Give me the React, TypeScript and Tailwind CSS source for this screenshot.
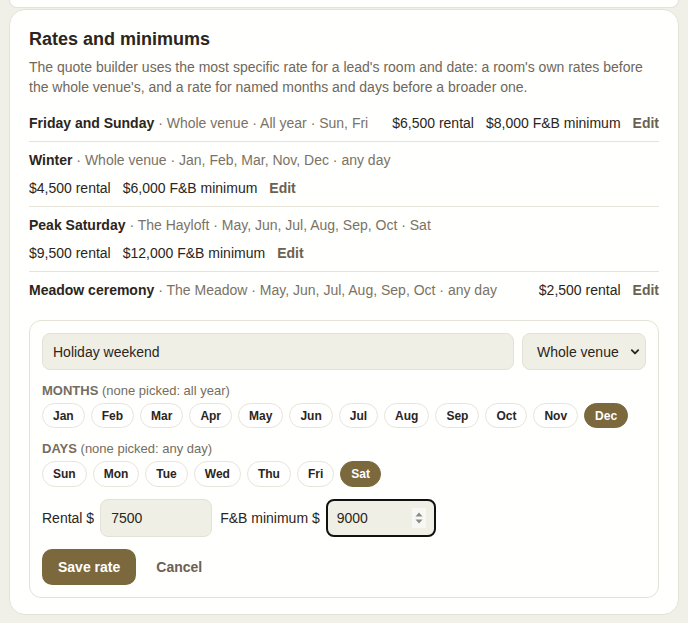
import React from "react";

const months = ["Jan", "Feb", "Mar", "Apr", "May", "Jun", "Jul", "Aug", "Sep", "Oct", "Nov", "Dec"];
const days = ["Sun", "Mon", "Tue", "Wed", "Thu", "Fri", "Sat"];

const rates = [
  { name: "Friday and Sunday", meta: "Whole venue · All year · Sun, Fri", rental: "$6,500 rental", fb: "$8,000 F&B minimum" },
  { name: "Winter", meta: "Whole venue · Jan, Feb, Mar, Nov, Dec · any day", rental: "$4,500 rental", fb: "$6,000 F&B minimum" },
  { name: "Peak Saturday", meta: "The Hayloft · May, Jun, Jul, Aug, Sep, Oct · Sat", rental: "$9,500 rental", fb: "$12,000 F&B minimum" },
  { name: "Meadow ceremony", meta: "The Meadow · May, Jun, Jul, Aug, Sep, Oct · any day", rental: "$2,500 rental", fb: "" },
];

function Chip({ label, on, tall }: { label: string; on?: boolean; tall?: boolean }) {
  const size = tall ? " h-[26px]" : " h-[25px]";
  return (
    <button
      className={
        (on
          ? "rounded-full border border-[#7b683d] bg-[#7b683d] px-2.5 text-xs leading-4 font-bold text-white"
          : "rounded-full border border-[#e7e4da] bg-white px-2.5 text-xs leading-4 font-bold text-[#2b2520]") + size
      }
    >
      {label}
    </button>
  );
}

export default function App() {
  return (
    <div className="min-h-screen bg-[#f1f0e8] px-[9px] pb-[9px] text-[#2b2520]" style={{ fontFamily: '"Liberation Sans", Arial, sans-serif' }}>
      <div className="h-[8px] rounded-b-2xl border border-t-0 border-[#e4e1d6] bg-[#fffffd]" />
      <div className="mt-px rounded-2xl border border-[#e4e1d6] bg-[#fffffd] px-[19px] pt-[15px] pb-4">
        <h2 className="text-lg leading-7 font-bold">Rates and minimums</h2>
        <p className="mt-1 text-sm leading-5 text-[#6f685c]">
          The quote builder uses the most specific rate for a lead's room and date: a room's own rates before the whole venue's, and a rate for named months and days before a broader one.
        </p>

        <div className="mt-2">
          {rates.map((r, i) => (
            <div
              key={r.name}
              className={
                "flex flex-wrap items-baseline justify-between gap-x-4 gap-y-2 py-2 text-sm leading-5" +
                (i < rates.length - 1 ? " border-b border-[#e6e3d9]" : "")
              }
            >
              <div>
                <span className="font-bold">{r.name}</span>
                <span className="text-[#7a7266]"> · {r.meta}</span>
              </div>
              <div className="flex gap-3">
                <span>{r.rental}</span>
                {r.fb && <span>{r.fb}</span>}
                <button className="font-bold text-[#6b6152]">Edit</button>
              </div>
            </div>
          ))}
        </div>

        <div className="mt-3 rounded-xl border border-[#e4e1d6] p-3">
          <div className="flex gap-2">
            <input
              defaultValue="Holiday weekend"
              className="h-[37px] min-w-0 flex-1 rounded-lg border border-[#e4e1d6] bg-[#f0efe6] px-[10px] text-sm text-[#2b2520] outline-none"
            />
            <div className="relative">
              <select className="h-[37px] w-[124px] appearance-none rounded-lg border border-[#e4e1d6] bg-[#f0efe6] pr-6 pl-[14px] text-sm text-[#2b2520] outline-none">
                <option>Whole venue</option>
                <option>The Hayloft</option>
                <option>The Meadow</option>
              </select>
              <svg
                width="10"
                height="10"
                viewBox="0 0 10 10"
                className="pointer-events-none absolute top-[14px] right-[6px]"
              >
                <path d="M1.8 3.2 L5 6.4 L8.2 3.2" fill="none" stroke="#2b2520" strokeWidth="1.9" strokeLinecap="round" strokeLinejoin="round" />
              </svg>
            </div>
          </div>

          <div className="mt-3 text-[13px] leading-[17px] text-[#756d5f]">
            <span className="font-bold">MONTHS</span> (none picked: all year)
          </div>
          <div className="mt-1 flex flex-wrap gap-1.5">
            {months.map((m) => (
              <Chip key={m} label={m} on={m === "Dec"} />
            ))}
          </div>

          <div className="mt-[13px] text-[13px] leading-4 text-[#756d5f]">
            <span className="font-bold">DAYS</span> (none picked: any day)
          </div>
          <div className="mt-1 flex flex-wrap gap-1.5">
            {days.map((d) => (
              <Chip key={d} label={d} on={d === "Sat"} tall />
            ))}
          </div>

          <div className="mt-3 flex items-center gap-2 text-sm">
            <label className="flex items-center gap-1.5">
              <span>Rental $</span>
              <input
                defaultValue="7500"
                className="h-[38px] w-[112px] rounded-lg border border-[#e4e1d6] bg-[#f0efe6] px-[10px] text-sm text-[#2b2520] outline-none"
              />
            </label>
            <label className="flex items-center gap-1.5">
              <span>F&amp;B minimum $</span>
              <div className="flex h-[38px] w-[110px] items-center rounded-lg border-2 border-[#111] bg-[#f0efe6] pr-2 pl-[9px]">
                <input defaultValue="9000" className="w-0 flex-1 bg-transparent text-sm text-[#2b2520] outline-none" />
                <svg width="14" height="20" viewBox="0 0 14 20" className="shrink-0">
                  <rect x="0" y="0" width="14" height="20" fill="#f7f7f4" />
                  <path d="M3.5 8.5 L7 4.5 L10.5 8.5 Z" fill="#8a8a8a" />
                  <path d="M3.5 11.5 L7 15.5 L10.5 11.5 Z" fill="#8a8a8a" />
                </svg>
              </div>
            </label>
          </div>

          <div className="mt-3 flex items-center gap-5">
            <button className="h-9 rounded-[10px] bg-[#7b683d] px-4 text-sm font-bold text-white">Save rate</button>
            <button className="text-sm font-bold text-[#6b6152]">Cancel</button>
          </div>
        </div>
      </div>
    </div>
  );
}
